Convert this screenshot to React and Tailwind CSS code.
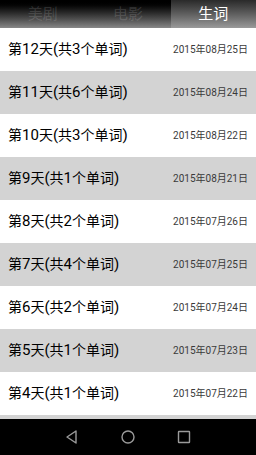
import React from "react";

const rows = [
  ["第12天(共3个单词)", "2015年08月25日"],
  ["第11天(共6个单词)", "2015年08月24日"],
  ["第10天(共3个单词)", "2015年08月22日"],
  ["第9天(共1个单词)", "2015年08月21日"],
  ["第8天(共2个单词)", "2015年07月26日"],
  ["第7天(共4个单词)", "2015年07月25日"],
  ["第6天(共2个单词)", "2015年07月24日"],
  ["第5天(共1个单词)", "2015年07月23日"],
  ["第4天(共1个单词)", "2015年07月22日"],
];

const font = { fontFamily: '"Roboto", "Noto Sans CJK SC", sans-serif' };

function Title({ text }) {
  const parts = text.split(/([0-9()]+)/).filter(Boolean);
  return (
    <span className="text-[14px] text-black">
      {parts.map((p, i) =>
        /^[0-9()]+$/.test(p) ? (
          <span key={i} className="font-['Liberation_Sans_Narrow','Roboto',sans-serif] text-[15px]">
            {p}
          </span>
        ) : (
          <span key={i}>{p}</span>
        )
      )}
    </span>
  );
}

export default function App() {
  return (
    <div className="w-[256px] h-[455px] flex flex-col overflow-hidden bg-white" style={font}>
      <div className="h-[28px] flex shrink-0 bg-gradient-to-b from-[#000000] to-[#888888]">
        <div className="flex-1 flex items-center justify-center text-[15px] text-white/15">美剧</div>
        <div className="flex-1 flex items-center justify-center text-[15px] text-white/15">电影</div>
        <div className="flex-1 flex items-center justify-center text-[15px] text-white bg-gradient-to-b from-[#2a2a2a] to-[#9a9a9a]">生词</div>
      </div>
      <div className="flex-1 overflow-hidden">
        {rows.map(([t, d], i) => (
          <div
            key={i}
            className={`h-[43px] flex items-center justify-between pl-[8px] pr-[8px] ${i % 2 === 1 ? "bg-[#d3d3d3]" : "bg-white"}`}
          >
            <Title text={t} />
            <span className="text-[10px] text-[#3a3a3a]">{d}</span>
          </div>
        ))}
        <div className="h-[43px] bg-[#d3d3d3]" />
      </div>
      <div className="h-[36px] shrink-0 bg-black flex items-center justify-center gap-[40px]">
        <svg width="16" height="16" viewBox="0 0 16 16">
          <path d="M12 2 L3 8 L12 14 Z" fill="none" stroke="#9a9a9a" strokeWidth="1.4" strokeLinejoin="round" />
        </svg>
        <svg width="16" height="16" viewBox="0 0 16 16">
          <circle cx="8" cy="8" r="6" fill="none" stroke="#9a9a9a" strokeWidth="1.4" />
        </svg>
        <svg width="16" height="16" viewBox="0 0 16 16">
          <rect x="2.5" y="2.5" width="11" height="11" fill="none" stroke="#9a9a9a" strokeWidth="1.4" rx="0.5" />
        </svg>
      </div>
    </div>
  );
}
